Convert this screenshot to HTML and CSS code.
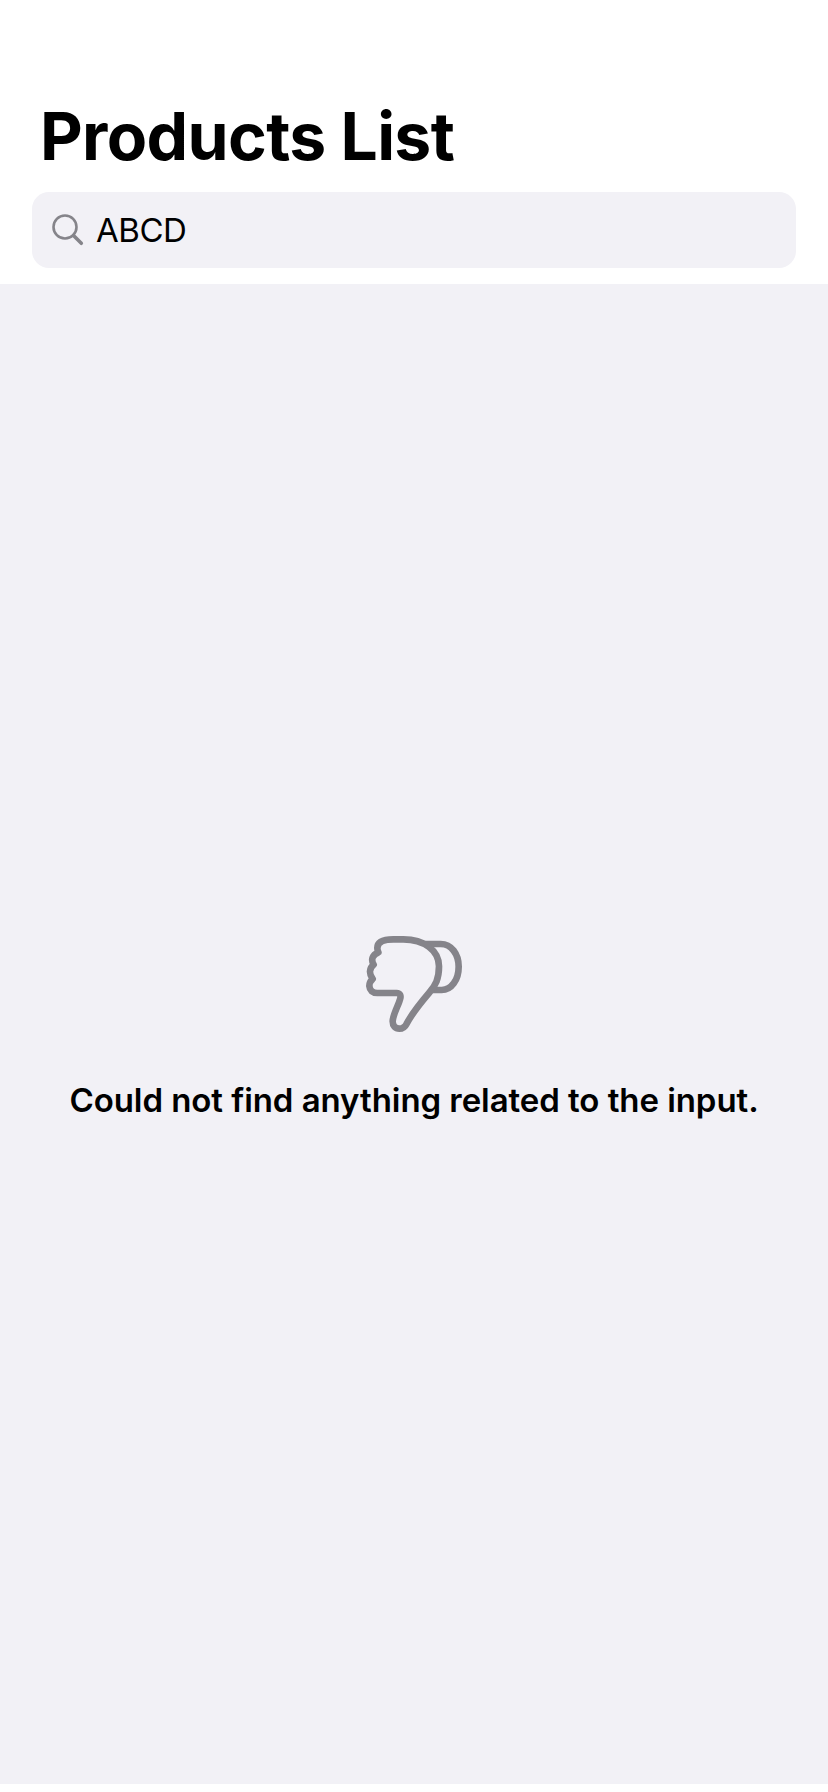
FILE: index.html
```html
<!DOCTYPE html>
<html lang="en">
<head>
<meta charset="utf-8">
<title>Products List</title>
<link rel="stylesheet" href="styles.css">
</head>
<body>
<div class="screen">
  <header class="header">
    <h1 class="title"><span>Products List</span></h1>
    <div class="search">
      <svg class="search-icon" viewBox="0 0 32 32" aria-hidden="true">
        <circle cx="13" cy="13" r="11.5" stroke-width="2.6"/>
        <path d="M21.5 21.5L29.3 29.3" stroke-width="3.6"/>
      </svg>
      <span class="query">ABCD</span>
    </div>
  </header>
  <main class="empty">
    <svg class="thumb" viewBox="0 0 390 390" aria-hidden="true">
      <path d="M227 72H272C304 72 326 102 326 140C326 180 304 210 275 210H248"/>
      <path d="M160 58H130C100 58 82 64 82 84C82 90 83 93 85 97C67 105 62 119 71 134C57 145 57 162 68 177C60 184 58 190 58 198C59 211 68 219 82 219H140C150 219 154 227 150 238C146 254 128 286 128 304C128 318 136 326 148 326C158 326 165 321 170 311C190 274 213 247 237 219C257 196 267 176 267 139C267 91 222 58 160 58Z"/>
    </svg>
    <p class="message"><span>Could not find anything related to the input.</span></p>
  </main>
</div>
</body>
</html>
```
FILE: styles.css
```css
* { box-sizing: border-box; }
body {
  margin: 0;
  background: #fff;
  color: #000;
  font-family: Inter, "Liberation Sans", sans-serif;
}
.screen {
  display: flex;
  flex-direction: column;
  height: 1792px;
  padding-bottom: 8px;
}
.header {
  height: 284px;
  padding: 96px 32px 0;
  background: #fff;
}
.title {
  margin: 0;
  padding-left: 8px;
  height: 96px;
  font-size: 66px;
  line-height: 80px;
  font-weight: 700;
  letter-spacing: -0.65px;
}
.search {
  display: flex;
  align-items: center;
  height: 76px;
  padding-left: 20px;
  border-radius: 17px;
  background: #f2f1f6;
}
.search-icon {
  width: 32px;
  height: 32px;
  margin-right: 12px;
  fill: none;
  stroke: #85848a;
  stroke-linecap: round;
}
.query {
  font-size: 33px;
  line-height: 40px;
  letter-spacing: -0.45px;
}
.empty {
  display: flex;
  flex: 1;
  flex-direction: column;
  align-items: center;
  padding-top: 636px;
  background: #f2f1f6;
}
.thumb {
  width: 130px;
  height: 130px;
  margin-left: 2px;
  fill: none;
  stroke: #85848a;
  stroke-width: 20;
  stroke-linecap: butt;
  stroke-linejoin: round;
}
.message {
  margin: 30px 0 0;
  font-size: 33px;
  line-height: 40px;
  font-weight: 600;
  letter-spacing: -0.06px;
  white-space: nowrap;
}
```
